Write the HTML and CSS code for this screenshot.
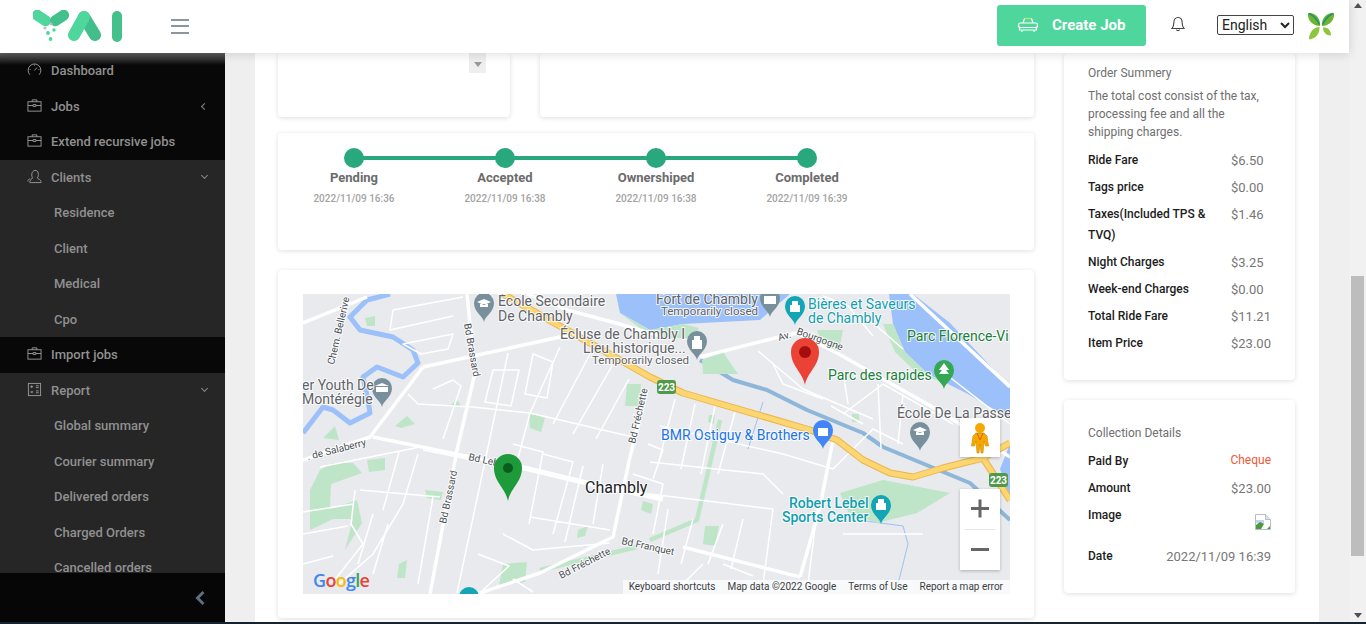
FILE: index.html
```html
<!DOCTYPE html>
<html lang="en">
<head>
  <meta charset="UTF-8" />
  <meta name="viewport" content="width=device-width, initial-scale=1.0" />
  <title>Job Details</title>
  <link rel="stylesheet" href="styles.css">
</head>
<body>
  <div class="screen">
    <div class="window">
      <header class="topbar">
        <div class="brand">
          <svg class="logo" width="90" height="32" viewBox="0 0 90 32">
            <rect x="-2" y="2.5" width="21" height="11" rx="5.5" fill="#4fd69c" transform="rotate(34 8.5 8)"/>
            <rect x="16" y="2.5" width="21" height="11" rx="5.5" fill="#43c08c" transform="rotate(-34 26.5 8)"/>
            <circle cx="12" cy="18" r="1.6" fill="#c9b9c9"/>
            <circle cx="18" cy="14" r="1.4" fill="#c9b9c9"/>
            <circle cx="15" cy="23" r="1.9" fill="#4fd69c"/>
            <circle cx="21" cy="20" r="1.7" fill="#4fd69c"/>
            <circle cx="17.5" cy="29" r="1.9" fill="#4fd69c"/>
            <path d="M62 25 51 7" stroke="#43bd8a" stroke-width="12" stroke-linecap="round"/>
            <path d="M41 25 51 7" stroke="#4fd69c" stroke-width="12" stroke-linecap="round"/>
            <rect x="79" y="1" width="10" height="31" rx="5" fill="#43c08c"/>
          </svg>
          <div class="burger"><span></span><span></span><span></span></div>
        </div>
        <div class="top-actions">
          <button class="create-btn" type="button">
            <svg width="22" height="18" viewBox="0 0 22 18" fill="none" stroke="#fff" stroke-width="1.2">
              <path d="M6 7 7.500 2.500h7L16 7"/>
              <path d="M7.500 2.500h7" stroke="#a8f06a"/>
              <rect x="1.500" y="7" width="19" height="4.500" rx="2"/>
              <path d="M2.500 11.500h17V14h-17zM5 14v2M17 14v2"/>
            </svg>
            Create Job
          </button>
          <svg class="bell" width="14" height="16" viewBox="0 0 14 16" fill="none" stroke="#444" stroke-width="1.1">
            <path d="M1 12.500c1.500-1.500 1.800-2.500 1.800-5.500C2.800 3.500 4.500 1.500 7 1.500s4.200 2 4.200 5.500c0 3 .3 4 1.800 5.500z"/>
            <path d="M5.500 13.500c.3 1.500 2.700 1.500 3 0"/>
          </svg>
          <select class="lang"><option>English</option></select>
          <svg class="leaf" width="28" height="28" viewBox="0 0 28 28">
            <path d="M1 1c7-1 13 5 12 13C6 14 0 8 1 1z" fill="#6cb52d"/>
            <path d="M2 1.500c5 2 8 6 10.500 11" stroke="#1e8f7a" stroke-width="1.5" fill="none"/>
            <path d="M27 1c-7-1-13 5-12 13 7 0 13-6 12-13z" fill="#6cb52d"/>
            <path d="M26 1.500c-5 2-8 6-10.500 11" stroke="#1e8f7a" stroke-width="1.5" fill="none"/>
            <path d="M12.500 15C6 15 2 21 2 27.500 8 27 13 22 12.500 15z" fill="#8cc63f"/>
            <path d="M16 15.500c5-.5 8 3 8 8-5 0-8-3.500-8-8z" fill="#8cc63f"/>
          </svg>
        </div>
      </header>

      <div class="layout">
        <aside class="sidebar">
          <nav class="menu">
            <a class="menu-item"><svg class="ico" viewBox="0 0 16 16"><path d="M3 13.500A6.800 6.800 0 1 1 13 13.500"/><path d="M8 9l2.500-3M2.800 8h1M12.200 8h1M8 2.800v1"/></svg>Dashboard</a>
            <a class="menu-item"><svg class="ico" viewBox="0 0 16 16"><rect x="1" y="4" width="14" height="10"/><path d="M5.500 4V2h5v2M1 8h5.500M9.500 8H15M6.500 7h3v2h-3z"/></svg>Jobs<span class="caret left"></span></a>
            <a class="menu-item"><svg class="ico" viewBox="0 0 16 16"><rect x="1" y="4" width="14" height="10"/><path d="M5.500 4V2h5v2M1 8h5.500M9.500 8H15M6.500 7h3v2h-3z"/></svg>Extend recursive jobs</a>
            <div class="menu-open">
              <a class="menu-item"><svg class="ico" viewBox="0 0 16 16"><path d="M6 9.500C4.500 8 4.500 2 8.500 1.500c4-.5 4.500 5.500 2.500 8 .5 1.500 4 1.500 4 4v1H3v-1c0-2.500 2.500-2.500 3-4z"/><path d="M3.500 10.500C.5 11 1 12.500 1 13.500"/></svg>Clients<span class="caret down"></span></a>
              <a class="sub-item">Residence</a>
              <a class="sub-item">Client</a>
              <a class="sub-item">Medical</a>
              <a class="sub-item">Cpo</a>
            </div>
            <a class="menu-item"><svg class="ico" viewBox="0 0 16 16"><rect x="1" y="4" width="14" height="10"/><path d="M5.500 4V2h5v2M1 8h5.500M9.500 8H15M6.500 7h3v2h-3z"/></svg>Import jobs</a>
            <div class="menu-open">
              <a class="menu-item"><svg class="ico" viewBox="0 0 16 16"><rect x="1.500" y="1.500" width="13" height="13"/><path d="M3.500 5h3M5 3.500v3M3.800 9.500l2.400 2.400M6.200 9.500l-2.400 2.400M9.500 4h3M9.500 6h3M9.500 9.500h3M9.500 11.500h3"/></svg>Report<span class="caret down"></span></a>
              <a class="sub-item">Global summary</a>
              <a class="sub-item">Courier summary</a>
              <a class="sub-item">Delivered orders</a>
              <a class="sub-item">Charged Orders</a>
              <a class="sub-item">Cancelled orders</a>
            </div>
          </nav>
          <div class="side-foot">
            <svg width="12" height="16" viewBox="0 0 12 16"><path d="M9.500 2 3.500 8l6 6" fill="none" stroke="#5f6d80" stroke-width="3"/></svg>
          </div>
        </aside>

        <main class="content">
          <div class="panel">
            <div class="col-main">
              <div class="top-row">
                <div class="card top-left"><span class="mini-scroll"></span></div>
                <div class="card top-right"></div>
              </div>

              <div class="card timeline">
                <div class="step">
                  <span class="dot"></span>
                  <strong>Pending</strong>
                  <small>2022/11/09 16:36</small>
                </div>
                <div class="step">
                  <span class="dot"></span>
                  <strong>Accepted</strong>
                  <small>2022/11/09 16:38</small>
                </div>
                <div class="step">
                  <span class="dot"></span>
                  <strong>Ownershiped</strong>
                  <small>2022/11/09 16:38</small>
                </div>
                <div class="step">
                  <span class="dot"></span>
                  <strong>Completed</strong>
                  <small>2022/11/09 16:39</small>
                </div>
              </div>

              <div class="card map-card">
                <div class="map">
                  <svg class="map-art" width="707" height="300" viewBox="0 0 707 300">
                    <rect width="707" height="300" fill="#e8eaed"/>

                    <!-- water -->
                    <path class="lake" d="M313 0H487L480 6 457 26 380 30 347 36 317 19z"/>
                    <path class="lake" d="M586 0H610L647 29 707 93V125L665 100 625 80 602 58 590 30z"/>
                    <path class="lake" d="M707 150 697 175 707 205z"/>
                    <path class="park" d="M317 19 347 36 380 30 396 34 392 44 350 44z"/>
                    <path class="park" d="M590 30 602 58 625 80 640 88 615 80 592 58 580 30z"/>
                    <path class="river" d="M397 66 430 86 464 96 504 116 560 139 580 153 667 189 707 226"/>
                    <path class="creek" d="M87 0 64 6 47 23 57 36 90 43 110 56 115 69 100 83 74 73 60 83 65 106 67 119 47 129 30 116 20 113 0 139"/>
                    <path class="creek thin" d="M460 108 445 155M556 226 600 232 605 250 595 290"/>

                    <!-- parks -->
                    <path class="park" d="M7 196 17 176 30 169 50 169 59 179 28 190 27 215 54 206 59 229 42 256 50 225 30 225 7 236z"/>
                    <path class="park" d="M537 199 580 186 647 199 614 219 574 229 545 218z"/>
                    <path class="park" d="M399 66 420 58 435 80 400 80z"/>
                    <path class="park" d="M514 36 540 36 535 60 520 52z"/>
                    <path class="park" d="M200 270 224 268 222 288 196 292z"/>
                    <path class="park" d="M226 119 242 124 238 138 227 134z"/>
                    <path class="park" d="M324 90 338 90 336 112 322 112z"/>
                    <path class="park" d="M64 166 82 164 82 176 66 178z"/>
                    <path class="park" d="M122 196 140 198 138 206 124 204z"/>
                    <path class="park" d="M62 24 72 22 72 32 64 32z"/>
                    <path class="park" d="M92 132 104 122 112 130 98 134z"/>
                    <path class="park" d="M146 112 154 106 158 112z"/>
                    <path class="park" d="M20 144 32 132 36 146z"/>
                    <path class="park" d="M275 236 285 232 282 242 274 244z"/>
                    <path class="park" d="M96 270 104 266 102 284 94 284z"/>
                    <path class="park" d="M340 207 350 210 348 220 338 216z"/>
                    <path class="park" d="M406 121 412 121 411 130 405 128z"/>
                    <path class="park" d="M549 120 556 120 556 128 549 128z"/>
                    <path class="green-line" d="M417 126 394 226 347 246M237 276 334 253"/>
                    <path class="park" d="M402 232 416 232 412 252 400 250z"/>

                    <!-- local streets -->
                    <path class="street" d="M205 59 154 299M170 113 227 119 330 143M257 53 227 119 210 183M287 60 250 130M310 70 270 140M326 85 293 145M200 240 230 256 307 249M227 223 307 236M17 173 117 153M57 196 137 203M120 156 165 165M105 100 115 110 170 113M130 95 150 86 158 92 140 145M190 76 182 108 208 112 216 76zM230 60 222 100 244 104 250 68zM210 150 240 158 226 230M240 160 270 168 250 240M280 172 262 248M115 160 100 210 70 260 36 290M96 158 80 216M52 196 48 230 60 250 30 288M130 203 115 290M70 220 55 270M85 230 70 280M175 260 206 272 180 296M210 285 230 298M330 180 360 190 350 240M345 150 360 156 350 185M300 170 290 230M0 218 50 210M0 240 45 232M0 270 30 262M90 16 160 3M90 16 87 36 150 22M100 50 150 40 145 55 118 60z"/>
                    <path class="street" d="M357 132 480 160 530 175M372 105 355 170M392 110 378 175M412 112 398 180M432 118 415 180M347 168 460 180 480 200M347 200 470 215M365 215 355 280M390 225 378 270M420 230 405 270M440 225 428 275M470 215 460 290M530 175 570 135 600 150M540 120 580 90 650 130M455 57 500 95 570 125M528 112 560 130M575 90 578 155M600 100 595 150M470 70 480 90 520 105M540 78 545 110M640 78 707 130M515 210 505 290M540 240 620 240M380 290 400 270M420 270 450 282M520 2 545 12 570 42M560 20 600 55"/>

                    <!-- main streets -->
                    <path class="road" d="M164 0 172 79 154 156 127 300"/>
                    <path class="road" d="M120 73 257 43 290 38"/>
                    <path class="road" d="M397 63 464 46 494 39 534 59 640 119 707 163"/>
                    <path class="road" d="M120 73 67 143 0 166"/>
                    <path class="road" d="M70 143 217 173"/>
                    <path class="road wide" d="M217 173 284 189 360 205"/>
                    <path class="road" d="M344 96 327 163 310 243 237 279 174 300"/>
                    <path class="road" d="M530 146 517 213 497 283"/>
                    <path class="road" d="M380 253 497 283"/>
                    <path class="road" d="M0 29 64 3"/>
                    <path class="road" d="M224 0 264 16 313 29 360 43"/>
                    <path class="road" d="M607 0 707 93"/>

                    <!-- highway -->
                    <path class="hwy-edge" d="M200 0 347 83 380 99 507 136 534 146 560 166 587 179 610 183 640 174 680 164 707 149M680 164 707 206"/>
                    <path class="hwy" d="M200 0 347 83 380 99 507 136 534 146 560 166 587 179 610 183 640 174 680 164 707 149M680 164 707 206"/>

                    <g class="shield">
                      <rect x="354" y="86" width="19" height="14" rx="3"/>
                      <text x="363.5" y="96.5">223</text>
                      <rect x="686" y="179" width="19" height="14" rx="3"/>
                      <text x="695.5" y="189.5">223</text>
                    </g>

                    <!-- places -->
                    <path class="poi grey" d="M181 28c-1-6-10-10-10-19a10 10 0 0 1 20 0c0 9-9 13-10 19z"/>
                    <path class="poi grey" d="M79 113c-1-6-10-10-10-19a10 10 0 0 1 20 0c0 9-9 13-10 19z"/>
                    <path class="poi grey" d="M467 23c-1-6-10-10-10-19a10 10 0 0 1 20 0c0 9-9 13-10 19z"/>
                    <path class="poi grey" d="M394 66c-1-6-10-10-10-19a10 10 0 0 1 20 0c0 9-9 13-10 19z"/>
                    <path class="poi grey" d="M617 157c-1-6-10-10-10-19a10 10 0 0 1 20 0c0 9-9 13-10 19z"/>
                    <path class="poi teal" d="M492 31c-1-6-10-10-10-19a10 10 0 0 1 20 0c0 9-9 13-10 19z"/>
                    <path class="poi teal" d="M578 230c-1-6-10-10-10-19a10 10 0 0 1 20 0c0 9-9 13-10 19z"/>
                    <path class="poi leafy" d="M641 95c-1-6-10-10-10-19a10 10 0 0 1 20 0c0 9-9 13-10 19z"/>
                    <path class="poi blue" d="M520 155c-1-6-10-10-10-19a10 10 0 0 1 20 0c0 9-9 13-10 19z"/>
                    <circle class="poi teal" cx="166" cy="303" r="10"/>
                    <path class="poi-mark" d="M174 8l7-3 7 3-7 3zM177 10v3h8v-3M72 92l7-3 7 3zM73 93h12v5H73zM461 2h12v8h-12zM389 46h10v9h-10zM391 42h6v4h-6zM610 136l7-3 7 3-7 3zM613 138v3h8v-3M487 11h10v7h-10zM489 7h6v4h-6zM573 209h10v7h-10zM575 205h6v4h-6zM641 69l-5 7h3l-3 4h10l-3-4h3zM515 134h10v8h-10z"/>

                    <!-- labels -->
                    <g class="lbl grey-text">
                      <text x="195" y="12">École Secondaire</text>
                      <text x="195" y="27">De Chambly</text>
                      <text x="-1" y="96">er Youth De</text>
                      <text x="-1" y="110">Montérégie</text>
                      <text x="257" y="45">Écluse de Chambly I</text>
                      <text x="280" y="59">Lieu historique...</text>
                      <text class="small" x="289" y="70">Temporarily closed</text>
                      <text x="455" y="10" text-anchor="end">Fort de Chambly</text>
                      <text class="small" x="455" y="21" text-anchor="end">Temporarily closed</text>
                      <text x="594" y="124">École De La Passe</text>
                    </g>
                    <g class="lbl teal-text">
                      <text x="505" y="15">Bières et Saveurs</text>
                      <text x="505" y="29">de Chambly</text>
                      <text class="med" x="486" y="214">Robert Lebel</text>
                      <text class="med" x="479" y="228">Sports Center</text>
                    </g>
                    <g class="lbl green-text">
                      <text x="604" y="47">Parc Florence-Vi</text>
                      <text x="525" y="86">Parc des rapides</text>
                    </g>
                    <text class="lbl blue-text" x="358" y="146">BMR Ostiguy &amp; Brothers</text>
                    <text class="town" x="282" y="199">Chambly</text>
                    <g class="road-lbl">
                      <text transform="translate(31 71) rotate(-77)">Chem. Bellerive</text>
                      <text transform="translate(161 30) rotate(80)">Bd Brassard</text>
                      <text transform="translate(143 230) rotate(-78)">Bd Brassard</text>
                      <text transform="translate(165 166) rotate(12)">Bd Leb</text>
                      <text transform="translate(5 166) rotate(-14)">. de Salaberry</text>
                      <text transform="translate(332 150) rotate(-77)">Bd Fréchette</text>
                      <text transform="translate(258 285) rotate(-27)">Bd Fréchette</text>
                      <text transform="translate(318 250) rotate(12)">Bd Franquet</text>
                      <text transform="translate(476 47) rotate(-16)">Av.</text>
                      <text transform="translate(493 40) rotate(20)">Bourgogne</text>
                    </g>

                    <!-- markers -->
                    <path fill="#1f9a3a" d="M205 207c-2-12-14-19-14-33a14 14 0 0 1 28 0c0 14-12 21-14 33z"/>
                    <circle cx="205" cy="174" r="5" fill="#0b5d1e"/>
                    <path fill="#ea4335" d="M502 91c-2-12-14-19-14-33a14 14 0 0 1 28 0c0 14-12 21-14 33z"/>
                    <circle cx="502" cy="58" r="6" fill="#a50e0e"/>
                  </svg>

                  <div class="map-logo"><b class="g1">G</b><b class="g2">o</b><b class="g3">o</b><b class="g1">g</b><b class="g4">l</b><b class="g2">e</b></div>

                  <div class="map-terms">
                    <span>Keyboard shortcuts</span>
                    <span>Map data ©2022 Google</span>
                    <span>Terms of Use</span>
                    <span>Report a map error</span>
                  </div>

                  <div class="map-controls">
                    <div class="pegman">
                      <svg width="18" height="32" viewBox="0 0 18 32">
                        <circle cx="9" cy="6" r="5" fill="#f5a800"/>
                        <path d="M5 11h8l3 3 1.500 10h-3L13 19l-1 12H10L9 22 8 31H6L5 19l-1.500 5h-3L2 14z" fill="#f5a800" stroke="#c98a00" stroke-width=".6"/>
                        <path d="M6 11l3 7 3-7" fill="none" stroke="#d8641a"/>
                      </svg>
                    </div>
                    <div class="zoom-box">
                      <button type="button" class="zoom-btn"><span class="bar-h"></span><span class="bar-v"></span></button>
                      <i></i>
                      <button type="button" class="zoom-btn"><span class="bar-h"></span></button>
                    </div>
                  </div>
                </div>
              </div>
            </div>

            <div class="col-side">
              <section class="card summary">
                <h4>Order Summery</h4>
                <p>The total cost consist of the tax, processing fee and all the shipping charges.</p>
                <div class="fare"><b>Ride Fare</b><span>$6.50</span></div>
                <div class="fare"><b>Tags price</b><span>$0.00</span></div>
                <div class="fare"><b>Taxes(Included TPS &amp; TVQ)</b><span>$1.46</span></div>
                <div class="fare"><b>Night Charges</b><span>$3.25</span></div>
                <div class="fare"><b>Week-end Charges</b><span>$0.00</span></div>
                <div class="fare"><b>Total Ride Fare</b><span>$11.21</span></div>
                <div class="fare"><b>Item Price</b><span>$23.00</span></div>
              </section>

              <section class="card collection">
                <h4>Collection Details</h4>
                <div class="detail"><b>Paid By</b><span class="cheque">Cheque</span></div>
                <div class="detail"><b>Amount</b><span>$23.00</span></div>
                <div class="detail image-row"><b>Image</b>
                  <svg width="16" height="16" viewBox="0 0 16 16">
                    <path d="M.5.500h10l5 5v10H.5z" fill="#fff" stroke="#b8bcc4"/>
                    <path d="M10.500.500v5h5" fill="#dfe3ea" stroke="#b8bcc4"/>
                    <path d="M1 9V6h8v4z" fill="#c4d4ee"/>
                    <path d="M1 15v-4l4-3 4 2-3 5z" fill="#4d9a3a"/>
                    <path d="M12 15l3-3v3z" fill="#4d9a3a"/>
                  </svg>
                </div>
                <div class="detail"><b>Date</b><span>2022/11/09 16:39</span></div>
              </section>
            </div>
          </div>
        </main>
      </div>
    </div>

    <div class="scrollbar">
      <span class="arrow up"></span>
      <span class="thumb"></span>
      <span class="arrow dn"></span>
    </div>
  </div>
  <div class="edge"></div>
</body>
</html>
```

FILE: styles.css
```css
* {
  box-sizing: border-box;
}
body {
  margin: 0;
  height: 624px;
  overflow: hidden;
  font-family: Roboto, "Liberation Sans", sans-serif;
  background: #efefef;
}
.screen {
  display: flex;
  height: 622px;
}
.edge {
  height: 2px;
  background: #16222e;
}
.window {
  flex: 1;
  display: flex;
  flex-direction: column;
  min-width: 0;
}

/* top bar */
.topbar {
  position: relative;
  z-index: 5;
  height: 53px;
  flex: none;
  display: flex;
  justify-content: space-between;
  background: #fff;
  box-shadow: 0 1px 10px rgba(0, 0, 0, 0.14);
}
.brand {
  display: flex;
  align-items: center;
  padding-left: 33px;
}
.logo {
  margin-top: -1px;
}
.burger {
  display: flex;
  flex-direction: column;
  gap: 4.5px;
  margin-left: 48px;
  width: 18px;
  margin-top: -1px;
}
.burger span {
  height: 2px;
  background: #8c96a0;
}
.top-actions {
  display: flex;
  align-items: flex-start;
  padding-right: 14px;
}
.create-btn {
  display: flex;
  align-items: center;
  width: 149px;
  height: 41px;
  margin-top: 5px;
  padding: 0 0 2px 20px;
  gap: 13px;
  border: none;
  border-radius: 3px;
  background: #4fd69c;
  color: #fff;
  font-family: inherit;
  font-size: 15px;
  font-weight: 700;
}
.bell {
  margin: 16px 0 0 25px;
}
.lang {
  width: 77px;
  height: 20px;
  margin: 15px 0 0 32px;
  border: 1px solid #444;
  border-radius: 2px;
  background: #fff;
  color: #222;
  font-family: Roboto, sans-serif;
  font-size: 14px;
}
.leaf {
  margin: 12px 0 0 13px;
}

/* sidebar */
.layout {
  flex: 1;
  display: flex;
  min-height: 0;
}
.sidebar {
  position: relative;
  width: 225px;
  flex: none;
  display: flex;
  flex-direction: column;
  background: #080808;
}
.sidebar::before {
  content: "";
  position: absolute;
  z-index: 2;
  left: 0;
  right: 0;
  top: 0;
  height: 12px;
  background: linear-gradient(rgba(255, 255, 255, 0.35), rgba(255, 255, 255, 0));
}
.menu {
  flex: 1;
  overflow: hidden;
  min-height: 0;
}
.menu-open {
  background: #262626;
}
.menu-item,
.sub-item {
  display: flex;
  align-items: center;
  height: 35.5px;
  color: #909090;
  font-size: 13px;
  font-weight: 500;
}
.menu-item {
  padding: 0 18px 0 27px;
}
.sub-item {
  padding-left: 54px;
}
.ico {
  width: 15px;
  height: 15px;
  margin: -2px 9px 0 0;
  fill: none;
  stroke: #999;
  stroke-width: 1;
}
.caret {
  width: 5px;
  height: 5px;
  margin-left: auto;
  border-left: 1.5px solid #888;
  border-bottom: 1.5px solid #888;
}
.caret.left {
  transform: rotate(45deg);
}
.caret.down {
  transform: rotate(-45deg);
  margin-top: -3px;
}
.side-foot {
  height: 49px;
  flex: none;
  display: flex;
  justify-content: flex-end;
  align-items: center;
  padding-right: 19px;
  background: #060606;
}

/* main */
.content {
  flex: 1;
  min-width: 0;
  padding: 0 30px;
  overflow: hidden;
}
.panel {
  display: flex;
  height: 100%;
  padding: 0 24px 0 23px;
  gap: 30px;
  background: #fff;
}
.col-main {
  width: 756px;
  flex: none;
}
.col-side {
  flex: 1;
}
.card {
  background: #fff;
  border-radius: 4px;
  box-shadow: 0 1px 5px rgba(0, 0, 0, 0.13);
}
.top-row {
  display: flex;
  gap: 30px;
  height: 64px;
}
.top-left {
  width: 232px;
  display: flex;
  justify-content: flex-end;
  padding-right: 24px;
}
.top-right {
  flex: 1;
}
.mini-scroll {
  display: flex;
  justify-content: center;
  align-items: center;
  width: 17px;
  height: 20px;
  background: #eee;
}
.mini-scroll::after {
  content: "";
  border: 4px solid transparent;
  border-top: 5px solid #999;
  border-bottom: none;
  margin-top: 2px;
}

/* timeline */
.timeline {
  display: flex;
  height: 117px;
  margin-top: 16px;
  padding-top: 15px;
}
.step {
  position: relative;
  width: 151px;
  display: flex;
  flex-direction: column;
  align-items: center;
  left: 0.5px;
}
.step + .step::before {
  content: "";
  position: absolute;
  top: 8px;
  left: -76px;
  width: 151px;
  height: 4px;
  background: #2aa87d;
}
.dot {
  position: relative;
  width: 20px;
  height: 20px;
  border-radius: 50%;
  background: #2aa87d;
}
.step strong {
  margin-top: 1px;
  color: #6b6b6b;
  font-size: 13px;
  font-weight: 700;
  line-height: 18px;
}
.step small {
  margin-top: 5px;
  color: #a3a3a3;
  font-size: 10px;
  font-weight: 500;
  line-height: 14px;
}

/* map */
.map-card {
  margin-top: 20px;
  padding: 24px 24px 24px 25px;
}
.map {
  position: relative;
  width: 707px;
  height: 300px;
  overflow: hidden;
  background: #e8eaed;
}
.map-art {
  display: block;
}
.lake {
  fill: #9cc0f9;
}
.park {
  fill: #bfe5c8;
}
.river,
.creek,
.road,
.street,
.hwy,
.hwy-edge,
.green-line {
  fill: none;
  stroke-linejoin: round;
}
.river {
  stroke: #8db6d8;
  stroke-width: 4;
}
.creek {
  stroke: #9cc0f9;
  stroke-width: 5;
}
.creek.thin {
  stroke-width: 1;
}
.street {
  stroke: #fff;
  stroke-width: 1.5;
}
.road {
  stroke: #fff;
  stroke-width: 3.5;
}
.road.wide {
  stroke-width: 5;
}
.green-line {
  stroke: #bfe5c8;
  stroke-width: 4.5;
}
.hwy-edge {
  stroke: #e8b64c;
  stroke-width: 7;
}
.hwy {
  stroke: #fdd672;
  stroke-width: 5;
}
.shield rect {
  fill: #4f9a4a;
}
.shield text {
  fill: #fff;
  font-size: 10px;
  font-weight: 700;
  text-anchor: middle;
}
.poi.grey {
  fill: #78909c;
}
.poi.teal {
  fill: #12a5b5;
}
.poi.leafy {
  fill: #34a853;
}
.poi.blue {
  fill: #4285f4;
}
.poi-mark {
  fill: #fff;
}
.lbl text,
text.lbl,
.town,
.road-lbl text {
  paint-order: stroke;
  stroke: rgba(255, 255, 255, 0.85);
  stroke-width: 2px;
}
.lbl {
  font-size: 14px;
}
.lbl .small {
  font-size: 11.5px;
}
.lbl .med {
  font-weight: 500;
}
.grey-text {
  fill: #5f6368;
}
.teal-text {
  fill: #129eaf;
}
.green-text {
  fill: #188038;
}
.blue-text {
  fill: #1a73e8;
}
.town {
  fill: #202124;
  font-size: 16px;
}
.road-lbl {
  fill: #4b4f55;
  font-size: 10px;
}
.map-logo {
  position: absolute;
  left: 10px;
  bottom: 2px;
  font-family: "Open Sans", sans-serif;
  font-size: 18px;
  line-height: 24px;
  letter-spacing: -0.7px;
}
.map-logo b {
  font-weight: 600;
}
.g1 {
  color: #4285f4;
}
.g2 {
  color: #ea4335;
}
.g3 {
  color: #fbbc05;
}
.g4 {
  color: #34a853;
}
.map-terms {
  position: absolute;
  right: 0;
  bottom: 0;
  display: flex;
  gap: 12px;
  height: 14px;
  padding: 0 7px 0 6px;
  background: rgba(255, 255, 255, 0.7);
  color: #3c4043;
  font-size: 10px;
  line-height: 14px;
  white-space: nowrap;
}
.map-controls {
  position: absolute;
  right: 10px;
  top: 124px;
  display: flex;
  flex-direction: column;
  gap: 32px;
  width: 40px;
}
.pegman {
  display: flex;
  justify-content: center;
  align-items: center;
  height: 39px;
  background: #fff;
  box-shadow: 0 1px 3px rgba(0, 0, 0, 0.25);
}
.zoom-box {
  display: flex;
  flex-direction: column;
  align-items: center;
  height: 81px;
  background: #fff;
  box-shadow: 0 1px 3px rgba(0, 0, 0, 0.25);
}
.zoom-box i {
  width: 30px;
  height: 1px;
  background: #e6e6e6;
}
.zoom-btn {
  position: relative;
  flex: 1;
  width: 100%;
  border: none;
  padding: 0;
  background: none;
}
.bar-h,
.bar-v {
  position: absolute;
  left: 11px;
  top: 18px;
  width: 18px;
  height: 3px;
  background: #666;
}
.bar-v {
  transform: rotate(90deg);
}

/* right column */
.summary {
  height: 327px;
  padding: 11px 24px 0;
}
.collection {
  height: 193px;
  margin-top: 20px;
  padding: 24px 24px 0;
}
h4 {
  margin: 0;
  color: #6f6f6f;
  font-size: 12px;
  font-weight: 400;
  line-height: 18px;
}
.summary p {
  margin: 5px 0 9px;
  color: #6f6f6f;
  font-size: 12px;
  line-height: 18px;
}
.fare {
  display: flex;
  padding-bottom: 6px;
  line-height: 21px;
}
.fare b,
.detail b {
  color: #1c1c1c;
  font-size: 12px;
  font-weight: 500;
}
.fare b {
  width: 143px;
  flex: none;
  padding-right: 20px;
}
.fare span,
.detail span {
  color: #777;
  font-size: 13px;
}
.detail {
  display: flex;
  justify-content: space-between;
  align-items: flex-start;
  padding-bottom: 6px;
  line-height: 21px;
}
.collection h4 + .detail {
  margin-top: 9px;
}
.detail .cheque {
  margin-top: -1px;
  color: #f0583a;
  font-size: 12px;
}
.image-row {
  height: 41px;
}
.image-row svg {
  margin-top: 9px;
}

/* page scrollbar */
.scrollbar {
  position: relative;
  width: 17px;
  flex: none;
  display: flex;
  flex-direction: column;
  align-items: center;
  background: #f1f1f1;
}
.arrow {
  position: absolute;
  border: 4px solid transparent;
}
.arrow.up {
  top: 3px;
  border-top: none;
  border-bottom: 5px solid #505050;
}
.arrow.dn {
  bottom: 4px;
  border-bottom: none;
  border-top: 5px solid #505050;
}
.thumb {
  position: absolute;
  top: 276px;
  width: 13px;
  height: 280px;
  background: #bdbdbd;
}
```
